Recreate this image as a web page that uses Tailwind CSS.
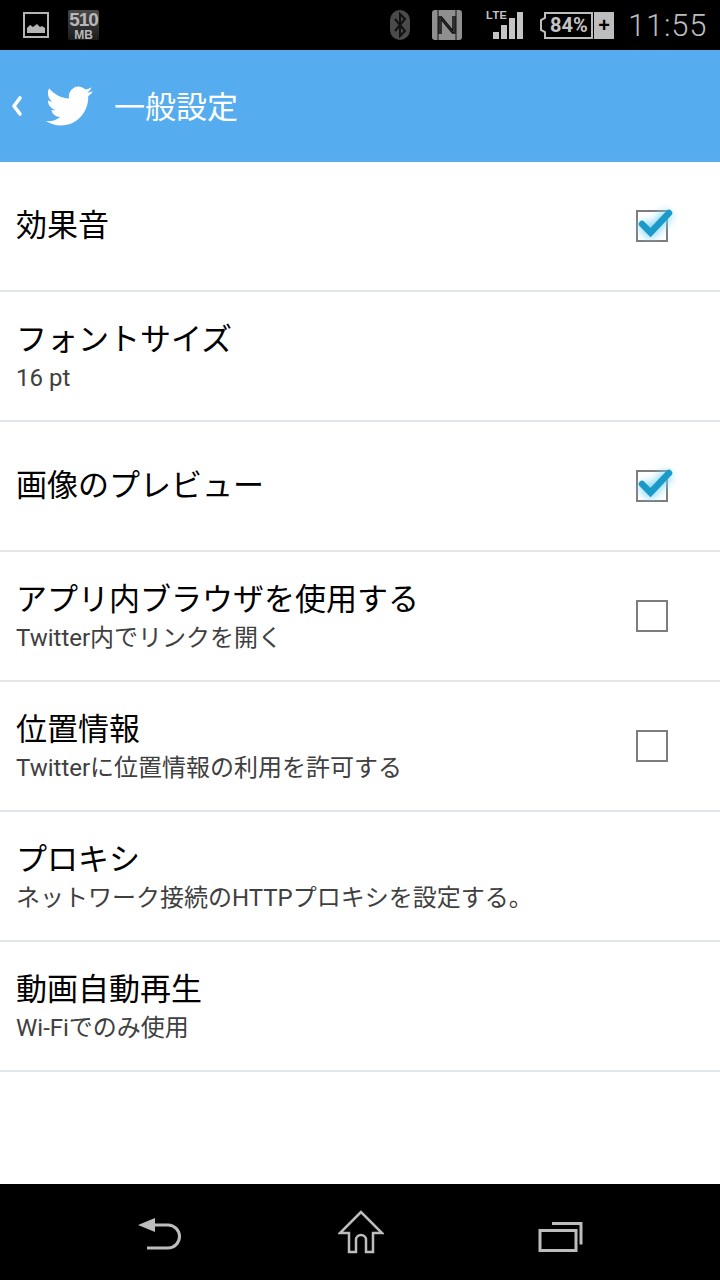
<!DOCTYPE html>
<html lang="ja">
<head>
<meta charset="utf-8">
<script src="https://cdn.jsdelivr.net/npm/@tailwindcss/browser@4"></script>
</head>
<body class="m-0 bg-white">
<div class="relative w-[720px] h-[1280px] flex flex-col overflow-hidden font-['Noto_Sans_CJK_JP','Noto_Sans',sans-serif]">
  <!-- status bar -->
  <div class="h-[50px] bg-black flex items-center text-[#bdbdbd] shrink-0">
    <svg class="ml-[23px] w-[26px] h-[26px]" viewBox="0 0 26 26"><rect x="1" y="1" width="24" height="24" fill="none" stroke="#b5b5b5" stroke-width="2"/><path d="M4 21v-5l3-3 3 2 4-3 3 3 2-1 3 2v5z" fill="#b5b5b5"/></svg>
    <div class="ml-[19px] w-[31px] h-[30px] bg-gradient-to-b from-[#4a4a4a] to-[#1c1c1c] rounded-[2px] flex flex-col items-center font-['Liberation_Sans',sans-serif] font-bold text-[#b8b8b8] leading-none">
      <span class="text-[19px] h-[18px] tracking-[-1px]">510</span>
      <span class="text-[12px] mt-[1px]">MB</span>
    </div>
    <svg class="ml-[290px] w-[22px] h-[32px]" viewBox="0 0 22 32"><rect x="1" y="1" width="20" height="30" rx="10" fill="#4a4a4a"/><path d="M6 10l10 12-5 5V5l5 5-10 12" fill="none" stroke="#111" stroke-width="2"/></svg>
    <svg class="ml-[20px] w-[32px] h-[32px]" viewBox="0 0 32 32"><rect x="1" y="1" width="30" height="30" rx="3" fill="#8f8f8f"/><path d="M7 1v30M25 1v30" stroke="#111" stroke-width="1"/><path d="M8 25V8h2.500l11.500 14V7M24 7v17h-2.500L10 10v15" fill="none" stroke="#111" stroke-width="1.500"/></svg>
    <div class="ml-[23px] w-[40px] h-[32px] relative">
      <span class="absolute left-[0px] top-[0px] text-[11px] leading-[12px] font-bold tracking-[0.5px] font-['Liberation_Sans',sans-serif] text-[#c4c4c4]">LTE</span>
      <svg class="absolute inset-0" width="40" height="32" viewBox="0 0 40 32"><g fill="#c4c4c4"><rect x="7" y="23" width="6" height="7"/><rect x="15" y="16" width="6" height="14"/><rect x="23" y="9" width="6" height="21"/><rect x="31" y="3" width="6" height="27"/></g></svg>
    </div>
    <div class="ml-[13px] flex items-center h-[30px] gap-[1px]">
      <svg class="w-[54px] h-[28px]" viewBox="0 0 54 28"><path d="M6 2h47v25H6v-6l-4-2V9l4-2z" fill="none" stroke="#bdbdbd" stroke-width="2"/></svg>
      <span class="w-[20px] h-[27px] bg-[#bdbdbd] text-black text-[20px] leading-[27px] text-center font-bold font-['Liberation_Sans',sans-serif]">+</span>
    </div>
    <span class="ml-[14px] text-[31px] leading-none tracking-[0.8px] font-['Roboto',sans-serif] font-light text-[#bdbdbd]">11:55</span>
    <span class="absolute left-[550px] top-[13px] text-[20px] leading-[24px] font-bold font-['Roboto',sans-serif] text-[#c4c4c4]">84%</span>
  </div>
  <!-- action bar -->
  <div class="h-[112px] bg-[#55acee] flex items-center shrink-0 text-white">
    <svg class="ml-[11px] w-[12px] h-[24px]" viewBox="0 0 12 24"><path d="M9 4L3 12l6 8" fill="none" stroke="#fff" stroke-width="3.6" stroke-linecap="round" stroke-linejoin="round"/></svg>
    <svg class="ml-[23px] w-[47px] h-[40px]" viewBox="0 0 24 20" preserveAspectRatio="none"><path transform="translate(0 -2)" fill="#fff" d="M23.953 4.57a10 10 0 01-2.825.775 4.958 4.958 0 002.163-2.723c-.951.555-2.005.959-3.127 1.184a4.92 4.92 0 00-8.384 4.482C7.69 8.095 4.067 6.13 1.64 3.162a4.822 4.822 0 00-.666 2.475c0 1.71.87 3.213 2.188 4.096a4.904 4.904 0 01-2.228-.616v.06a4.923 4.923 0 003.946 4.827 4.996 4.996 0 01-2.212.085 4.936 4.936 0 004.604 3.417 9.867 9.867 0 01-6.102 2.105c-.39 0-.779-.023-1.17-.067a13.995 13.995 0 007.557 2.209c9.053 0 13.998-7.496 13.998-13.985 0-.21 0-.42-.015-.63A9.935 9.935 0 0024 4.59z"/></svg>
    <span class="ml-[21px] pb-[4px] text-[31px] leading-none">一般設定</span>
  </div>
  <!-- list -->
  <div class="flex-1 flex flex-col bg-white text-black">
    <div class="h-[130px] border-b-2 border-[#e1e6ec] flex items-center pl-[16px] pr-[52px] justify-between">
      <div class="text-[31px] leading-[40px] pb-[6px]">効果音</div>
      <svg class="w-[40px] h-[40px] mr-[-4px] overflow-visible" viewBox="0 0 40 40"><defs><filter id="g1" x="-40%" y="-40%" width="180%" height="180%"><feGaussianBlur stdDeviation="4"/></filter></defs><rect x="5" y="5" width="30" height="30" fill="#fff" stroke="#7d7d7d" stroke-width="2"/><path d="M10 18l8.500 8.500L37 7" fill="none" stroke="#7fd6f5" stroke-width="10" filter="url(#g1)"/><path d="M10 18l8.500 8.500L37 7" fill="none" stroke="#1b9ac9" stroke-width="6.500" stroke-linecap="round"/></svg>
    </div>
    <div class="h-[130px] border-b-2 border-[#e1e6ec] flex items-center pl-[16px] pr-[52px] justify-between">
      <div class="flex flex-col">
        <div class="text-[31px] leading-[40px]">フォントサイズ</div>
        <div class="text-[24px] leading-[36px] mt-[3px] mb-[-1px] text-[#404040] font-['Roboto','Noto_Sans_CJK_JP',sans-serif]">16 pt</div>
      </div>
    </div>
    <div class="h-[130px] border-b-2 border-[#e1e6ec] flex items-center pl-[16px] pr-[52px] justify-between">
      <div class="text-[31px] leading-[40px] pb-[6px]">画像のプレビュー</div>
      <svg class="w-[40px] h-[40px] mr-[-4px] overflow-visible" viewBox="0 0 40 40"><defs><filter id="g2" x="-40%" y="-40%" width="180%" height="180%"><feGaussianBlur stdDeviation="4"/></filter></defs><rect x="5" y="5" width="30" height="30" fill="#fff" stroke="#7d7d7d" stroke-width="2"/><path d="M10 18l8.500 8.500L37 7" fill="none" stroke="#7fd6f5" stroke-width="10" filter="url(#g2)"/><path d="M10 18l8.500 8.500L37 7" fill="none" stroke="#1b9ac9" stroke-width="6.500" stroke-linecap="round"/></svg>
    </div>
    <div class="h-[130px] border-b-2 border-[#e1e6ec] flex items-center pl-[16px] pr-[52px] justify-between">
      <div class="flex flex-col">
        <div class="text-[31px] leading-[40px]">アプリ内ブラウザを使用する</div>
        <div class="text-[24px] leading-[36px] mt-[3px] mb-[-1px] text-[#404040] font-['Roboto','Noto_Sans_CJK_JP',sans-serif]">Twitter内でリンクを開く</div>
      </div>
      <div class="w-[32px] h-[32px] border-2 border-[#7d7d7d] bg-white"></div>
    </div>
    <div class="h-[130px] border-b-2 border-[#e1e6ec] flex items-center pl-[16px] pr-[52px] justify-between">
      <div class="flex flex-col">
        <div class="text-[31px] leading-[40px]">位置情報</div>
        <div class="text-[24px] leading-[36px] mt-[3px] mb-[-1px] text-[#404040] font-['Roboto','Noto_Sans_CJK_JP',sans-serif]">Twitterに位置情報の利用を許可する</div>
      </div>
      <div class="w-[32px] h-[32px] border-2 border-[#7d7d7d] bg-white"></div>
    </div>
    <div class="h-[130px] border-b-2 border-[#e1e6ec] flex items-center pl-[16px] pr-[52px] justify-between">
      <div class="flex flex-col">
        <div class="text-[31px] leading-[40px]">プロキシ</div>
        <div class="text-[24px] leading-[36px] mt-[3px] mb-[-1px] text-[#404040] font-['Roboto','Noto_Sans_CJK_JP',sans-serif]">ネットワーク接続のHTTPプロキシを設定する。</div>
      </div>
    </div>
    <div class="h-[130px] border-b-2 border-[#e1e6ec] flex items-center pl-[16px] pr-[52px] justify-between">
      <div class="flex flex-col">
        <div class="text-[31px] leading-[40px]">動画自動再生</div>
        <div class="text-[24px] leading-[36px] mt-[3px] mb-[-1px] text-[#404040] font-['Roboto','Noto_Sans_CJK_JP',sans-serif]">Wi-Fiでのみ使用</div>
      </div>
    </div>
  </div>
  <!-- nav bar -->
  <div class="h-[96px] bg-black flex items-center shrink-0">
    <svg class="ml-[138px] w-[46px] h-[40px]" viewBox="0 -4 46 40"><path d="M0 9L17 2v14z" fill="#bdbdbd"/><path d="M15 9h15a11.500 11.500 0 0 1 0 23H9" fill="none" stroke="#bdbdbd" stroke-width="3"/></svg>
    <svg class="ml-[154px] w-[46px] h-[44px]" viewBox="0 0 46 44"><path d="M23 2L2 23h9v19h7V30a5 5 0 0 1 10 0v12h7V23h9z" fill="none" stroke="#bdbdbd" stroke-width="2.500"/></svg>
    <svg class="ml-[154px] w-[46px] h-[40px]" viewBox="0 -9.500 46 40"><rect x="2" y="9" width="36" height="20" fill="none" stroke="#bdbdbd" stroke-width="3"/><path d="M14 2h29v21" fill="none" stroke="#bdbdbd" stroke-width="3"/></svg>
  </div>
</div>
</body>
</html>
